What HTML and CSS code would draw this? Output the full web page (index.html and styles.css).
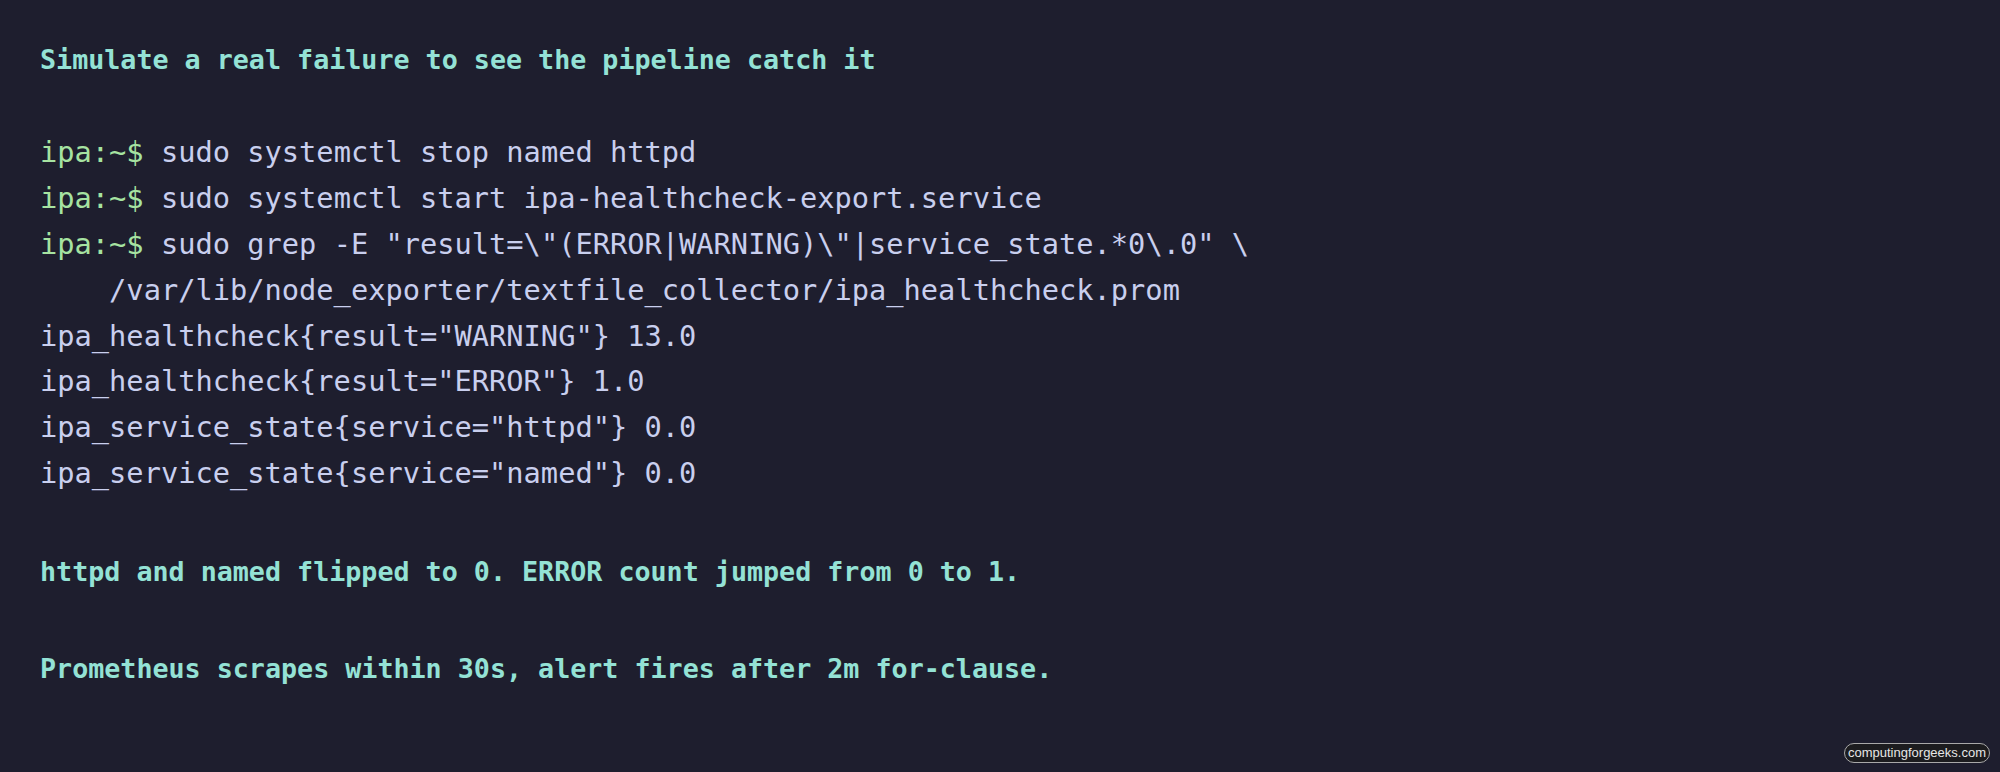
FILE: index.html
```html
<!DOCTYPE html>
<html lang="en">
<head>
<meta charset="utf-8">
<title>IPA healthcheck failure simulation</title>
<link rel="stylesheet" href="styles.css">
</head>
<body>
<main class="term">
  <div class="note note-first">Simulate a real failure to see the pipeline catch it</div>
  <div class="block">
    <div class="line"><span class="prompt">ipa:~$</span> sudo systemctl stop named httpd</div>
    <div class="line"><span class="prompt">ipa:~$</span> sudo systemctl start ipa-healthcheck-export.service</div>
    <div class="line"><span class="prompt">ipa:~$</span> sudo grep -E "result=\"(ERROR|WARNING)\"|service_state.*0\.0" \</div>
    <div class="line">    /var/lib/node_exporter/textfile_collector/ipa_healthcheck.prom</div>
    <div class="line">ipa_healthcheck{result="WARNING"} 13.0</div>
    <div class="line">ipa_healthcheck{result="ERROR"} 1.0</div>
    <div class="line">ipa_service_state{service="httpd"} 0.0</div>
    <div class="line">ipa_service_state{service="named"} 0.0</div>
  </div>
  <div class="note note-mid">httpd and named flipped to 0. ERROR count jumped from 0 to 1.</div>
  <div class="note note-last">Prometheus scrapes within 30s, alert fires after 2m for-clause.</div>
</main>
<div class="badge">computingforgeeks.com</div>
</body>
</html>
```
FILE: styles.css
```css
html, body {
  margin: 0;
  padding: 0;
}
body {
  width: 2000px;
  height: 772px;
  background: #1e1e2e;
  overflow: hidden;
  position: relative;
}
.term {
  display: flex;
  flex-direction: column;
  padding: 37px 0 0 40px;
  font-family: "DejaVu Sans Mono", "Liberation Mono", monospace;
}
.block {
  display: flex;
  flex-direction: column;
  margin-top: 47px;
}
.line {
  white-space: pre;
  font-size: 28.7px;
  line-height: 45.9px;
  height: 45.9px;
  color: #c9cfee;
}
.prompt {
  color: #a6e3a1;
}
.note {
  white-space: pre;
  font-size: 26.7px;
  font-weight: bold;
  line-height: 46px;
  height: 46px;
  color: #94e2d5;
}
.note-mid {
  margin-top: 52px;
}
.note-last {
  margin-top: 51px;
}
.badge {
  position: absolute;
  left: 1844px;
  top: 743px;
  width: 144px;
  height: 18px;
  border: 1px solid #a9a9a9;
  border-radius: 10px;
  background: #1c1c1f;
  color: #e6e6e6;
  font-family: "Liberation Sans", Arial, sans-serif;
  font-size: 13px;
  line-height: 18px;
  text-align: center;
}
```
